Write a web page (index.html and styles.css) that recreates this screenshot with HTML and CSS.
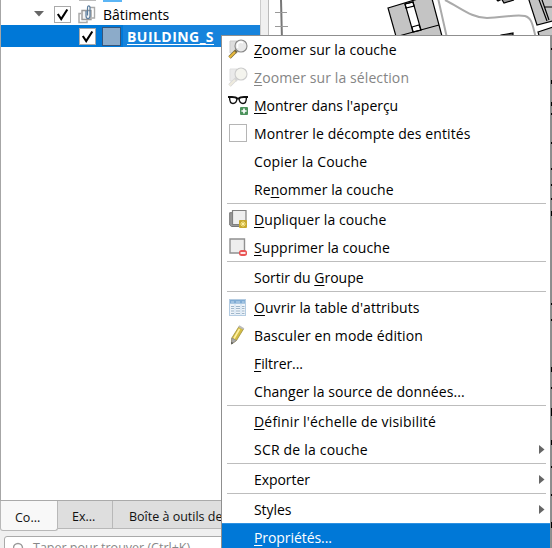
FILE: index.html
```
<!DOCTYPE html>
<html lang="fr">
<head>
<meta charset="utf-8">
<title>Couches</title>
<link rel="stylesheet" href="styles.css">
</head>
<body>
<div class="app">
  <div class="dock">
    <div class="tree">
      <div class="previous"><span class="prev-check"></span><span class="prev-swatch"></span></div>
      <div class="tree-row group">
        <svg class="twisty" width="10" height="6"><path d="M0 0H10L5 5.5Z" fill="#666"/></svg>
        <span class="check"><svg width="15" height="15"><path d="M2.8 7L6.2 12L12.3 2.5" fill="none" stroke="#000" stroke-width="2.1"/></svg></span>
        <svg class="group-icon" width="18" height="19" fill="none"><path d="M3 8.5H1V17.5H9V15.5" stroke="#aaa" stroke-width="1.5"/><path d="M4 5.5H13V14.5H4Z" stroke="#999" stroke-width="1.4" fill="#f4f4f4"/><path d="M12 2.5H16.5V13H14" stroke="#aaa" stroke-width="1.4"/><path d="M8 6V11Q8 13.5 10 13.5Q12 13.5 12 11V3Q12 .8 10.5 .8Q9.5 .8 9.5 3V10.5" stroke="#587b9c" stroke-width="1.2"/></svg>
        <span class="group-name">Bâtiments</span>
      </div>
      <div class="tree-row layer">
        <span class="check"><svg width="15" height="15"><path d="M2.8 7L6.2 12L12.3 2.5" fill="none" stroke="#000" stroke-width="2.1"/></svg></span>
        <span class="swatch"></span>
        <span class="layer-name">BUILDING_S</span>
      </div>
    </div>
    <div class="tabs"><span class="tab active">Co...</span><span class="tab second">Ex...</span><span class="tab third">Boîte à outils de</span></div>
    <div class="search"><svg width="14" height="14"><circle cx="5" cy="6" r="4.5" fill="none" stroke="#999" stroke-width="1.4"/></svg><span>Taper pour trouver (Ctrl+K)</span></div>
  </div>
  <div class="splitter"></div>
  <svg class="map" width="283" height="548" viewBox="269 0 283 548">
    <rect x="269" width="283" height="548" fill="#fff"/>
    <path d="M281 0L282 40" stroke="#777" stroke-width="2"/>
    <path d="M275 12.5H287M275 26.5H288" stroke="#999" stroke-width="1.2"/>
    <g fill="#c4c4c4" stroke="#000" stroke-width="1.2">
      <path d="M388 8L431-5L443 40H397Z"/>
      <path d="M405 4L413 2L421 30L413 32Z" fill="#fff"/>
      <path d="M405 4L413 2L414 6L406 8ZM412 27L419 25L421 30L413 32ZM395 37L439 25" fill="none"/>
      <path d="M528-3L537 25L556 20V-3ZM538-3L547 21M541-3L549 20M545 7H552"/>
      <path d="M538 32L553 27V50H543Z"/>
      <path d="M496-1L498 1L502-1M501-2L504 3L514 0" fill="#999"/>
      <path d="M501 35L513 33V37H501Z" fill="#555"/>
    </g>
    <path d="M438-2L447 38M445 0C461 8 472 18 487 18C502 18 514 14 525 16C533 18 533 29 536 38" fill="none" stroke="#aaa" stroke-width="2"/>
    <path d="M551 35V548" stroke="#8c8c8c" stroke-width="2"/>
    <path d="M551.5 48v2M551.5 80v4M551.5 102v4M551.5 113v2M551.5 142v2M551.5 168v2M551.5 184v2M551.5 198v2M551.5 211v5M551.5 303v2M551.5 319v2M551.5 367v5M551.5 387v2M551.5 408v8M551.5 440v5M551.5 466v2M551.5 494v2M551.5 522v6" stroke="#000"/>
  </svg>
  <nav class="menu">
    <div class="item"><span class="icon"><svg width="20" height="20"><path d="M2 2H9V14H2Z" fill="#ddd" stroke="#ccc"/><path d="M8.5 11.5L1.5 18.5" stroke="#77683a" stroke-width="3.4"/><path d="M7 13L1.5 18.5" stroke="#e8b93c" stroke-width="2.2"/><circle cx="13" cy="7" r="6" fill="#e9e9e9" stroke="#888" stroke-width="1.1"/><path d="M9.5 9V5Q12 2 15 4" fill="none" stroke="#fff" stroke-width="1.6"/></svg></span><span class="label l1"><u>Z</u>oomer sur la couche</span></div>
    <div class="item disabled"><span class="icon"><svg width="20" height="20"><path d="M2 2H9V14H2Z" fill="#ddd" stroke="#ccc"/><path d="M8.5 11.5L1.5 18.5" stroke="#bbb" stroke-width="3.4"/><path d="M7 13L1.5 18.5" stroke="#e4dfc9" stroke-width="2.2"/><circle cx="13" cy="7" r="6" fill="#eeeee4" stroke="#aaa" stroke-width="1.1"/></svg></span><span class="label l2"><u>Z</u>oomer sur la sélection</span></div>
    <div class="item"><span class="icon"><svg width="20" height="20"><path d="M0 2H4Q8 2 9 3.5H11Q12 2 16 2H20" fill="none" stroke="#111" stroke-width="1.8"/><path d="M1.6 2.5Q1.6 8.5 5 8.5Q8.5 8.5 9 3.5M11 3.5Q11.5 8.5 15 8.5Q18.4 8.5 18.4 2.5" fill="none" stroke="#111" stroke-width="1.4"/><rect x="12" y="12" width="8" height="8" rx="1" fill="#4c935c"/><path d="M16 13.4V18.6M13.4 16H18.6" stroke="#fff" stroke-width="1.7"/></svg></span><span class="label l3"><u>M</u>ontrer dans l'aperçu</span></div>
    <div class="item"><span class="icon"><span class="box"></span></span><span class="label l4">Montrer le décompte des entités</span></div>
    <div class="item"><span class="icon"></span><span class="label l5">Copier la Couche</span></div>
    <div class="item"><span class="icon"></span><span class="label l6">Re<u>n</u>ommer la couche</span></div>
    <div class="sep"></div>
    <div class="item"><span class="icon"><svg width="20" height="20"><path d="M1.7 3.7H13V17.5H3.5L1.7 16Z" fill="#999" stroke="#777"/><path d="M4.5 1.5H18V15.5H4.5Z" fill="#eee" stroke="#808080" stroke-width="1.2"/><rect x="11" y="11" width="8" height="8" rx="1" fill="#c8a92e"/><path d="M15 12.2v5.6M12.2 15h5.6M13.2 13.2l3.6 3.6M16.8 13.2l-3.6 3.6" stroke="#fff3a4" stroke-width=".9"/></svg></span><span class="label l7"><u>D</u>upliquer la couche</span></div>
    <div class="item"><span class="icon"><svg width="20" height="20"><path d="M2 2H16.5V16H2Z" fill="#eee" stroke="#909090" stroke-width="1.4"/><rect x="11" y="13" width="8" height="6" rx="2.5" fill="#e95454"/><path d="M12.5 16H17.5" stroke="#fff" stroke-width="1.7"/></svg></span><span class="label l8"><u>S</u>upprimer la couche</span></div>
    <div class="sep"></div>
    <div class="item"><span class="icon"></span><span class="label l9">Sortir du <u>G</u>roupe</span></div>
    <div class="sep"></div>
    <div class="item"><span class="icon"><svg width="20" height="20"><rect x="1.5" y="2.5" width="16" height="16" fill="#eef3f8" stroke="#b4cce2"/><path d="M2 4.8H17" stroke="#7fabd4" stroke-width="3.6"/><path d="M3 5H6M8 5H12M14 5H16.5" stroke="#c5dcf0"/><path d="M3 9.5H6M8 9.5H12M14 9.5H16.5M3 11.5H6M8 11.5H12M14 11.5H16.5M3 14H6M8 14H12M14 14H16.5M3 16.5H6M8 16.5H12M14 16.5H16.5" stroke="#9fb6ca"/><path d="M7 7V18M13 7V18" stroke="#cce0f2"/></svg></span><span class="label l10"><u>O</u>uvrir la table d'attributs</span></div>
    <div class="item"><span class="icon"><svg width="20" height="20"><path d="M11 1.5L15.5 4L8.5 15.5L3.5 19L3.8 13Z" fill="#d4bd43" stroke="#a08f3c" stroke-width=".8"/><path d="M11.5 4L6 13.5" stroke="#fff1a0" stroke-width="1.6"/><path d="M3.8 13L8.5 15.5L3.5 19Z" fill="#aaa" stroke="#888" stroke-width=".7"/><path d="M3.4 17V19.3L5.3 18Z" fill="#444"/><path d="M10.8 1.2L15.8 4" stroke="#bbb" stroke-width="2"/></svg></span><span class="label l11">Basculer en mode édition</span></div>
    <div class="item"><span class="icon"></span><span class="label l12"><u>F</u>iltrer...</span></div>
    <div class="item"><span class="icon"></span><span class="label l13">Changer la source de données...</span></div>
    <div class="sep"></div>
    <div class="item"><span class="icon"></span><span class="label l14"><u>D</u>éfinir l'échelle de visibilité</span></div>
    <div class="item"><span class="icon"></span><span class="label l15">SCR de la couche</span><svg class="arrow" width="6" height="9"><path d="M0 0L5.5 4.5L0 9Z" fill="#666"/></svg></div>
    <div class="sep"></div>
    <div class="item"><span class="icon"></span><span class="label l16">Exporter</span><svg class="arrow" width="6" height="9"><path d="M0 0L5.5 4.5L0 9Z" fill="#666"/></svg></div>
    <div class="sep"></div>
    <div class="item"><span class="icon"></span><span class="label l17">Styles</span><svg class="arrow" width="6" height="9"><path d="M0 0L5.5 4.5L0 9Z" fill="#666"/></svg></div>
    <div class="item selected"><span class="icon"></span><span class="label l18"><u>P</u>ropriétés...</span></div>
  </nav>
</div>
</body>
</html>
```
FILE: styles.css
```
* { box-sizing: border-box; }
body { margin: 0; overflow: hidden; font: 14px "Open Sans", "Noto Sans", sans-serif; color: #000; }
.app { position: relative; display: flex; width: 552px; height: 548px; overflow: hidden; background: #f0f0f0; }
.dock { width: 260px; flex: none; display: flex; flex-direction: column; }
.tree { height: 501px; flex: none; background: #fff; border-left: 1px solid #a6a6a6; border-bottom: 1px solid #aaa; }
.previous { height: 3px; display: flex; align-items: flex-start; padding-left: 78px; gap: 7px; }
.prev-check { width: 17px; height: 1px; background: #bbb; }
.prev-swatch { width: 19px; height: 2px; background: #5bb5f5; }
.tree-row { display: flex; align-items: center; height: 22px; white-space: nowrap; }
.group { padding-left: 33px; }
.check { display: flex; width: 17px; height: 17px; border: 1px solid #aaa; background: #fff; flex: none; }
.group .check { margin-left: 10px; }
.group-icon { margin-left: 7px; }
.group-name { margin-left: 7px; letter-spacing: -.02px; }
.layer { padding-left: 78px; background: linear-gradient(90deg, #0078d7 0 122px, #1683dc 122px); }
.swatch { width: 19px; height: 19px; margin-left: 6px; background: #8cabc9; border: 1px solid #36557b; flex: none; }
.layer-name { margin-left: 6px; color: #fff; font-weight: 700; text-decoration: underline; text-underline-offset: 2px; letter-spacing: .45px; }
.tabs { display: flex; flex: none; height: 29px; align-items: flex-start; font-size: 12.5px; line-height: 17px; color: #111; }
.tab { height: 28px; padding-top: 7px; border: 1px solid #b8b8b8; border-top: 0; background: #dedede; white-space: nowrap; }
.active { width: 58px; height: 30px; padding: 8px 0 0 14px; background: #f8f8f8; border-radius: 0 0 3px 3px; }
.second { width: 55px; padding-left: 14px; border-left: 0; }
.third { width: 147px; padding-left: 16px; border-left: 0; }
.search { display: flex; flex: none; height: 28px; margin: 6px 0 0 4px; padding: 4px 0 0 8px; background: #fff; border: 1px solid #aaa; border-radius: 3px; color: #888; font-size: 12.5px; line-height: 14px; white-space: nowrap; }
.search svg { margin-top: 1px; }
.search span { margin-left: 6px; }
.splitter { width: 9px; flex: none; background: #f0f0f0; border-left: 1px solid #ccc; border-right: 1px solid #bbb; }
.map { display: block; flex: none; }
.menu { position: absolute; left: 221px; top: 35px; width: 330px; height: 520px; background: #fff; }
.menu::after { content: ""; position: absolute; inset: 0; border: 1px solid #8f8f8f; pointer-events: none; }
.item { display: flex; align-items: center; height: 28px; padding: 0 6px 0 7px; white-space: nowrap; }
.icon { display: flex; width: 20px; height: 20px; margin-right: 6px; flex: none; }
.box { width: 18px; height: 18px; margin: 1px; border: 1px solid #b5b5b5; }
.label { padding-top: 1px; letter-spacing: .06px; }
.l2 { letter-spacing: .1px; }
.l3, .l9 { letter-spacing: -.02px; }
.l4, .l7 { letter-spacing: .1px; }
.l5 { letter-spacing: .17px; }
.l11 { letter-spacing: .1px; }
.l12, .l16, .l17, .l18 { letter-spacing: -.07px; }
.l14 { letter-spacing: .17px; }
.l15 { letter-spacing: .2px; }
.item u { text-decoration-thickness: 1px; text-underline-offset: 2px; }
.disabled { color: #858585; }
.disabled svg { opacity: .6; }
.sep { height: 2px; margin: 0 5px 0 6px; border-top: 1px solid #bdbdbd; }
.arrow { margin-left: auto; }
.selected { background: #0078d7; border-top: 1px solid #2d91e2; color: #fff; }
.selected .label { padding-top: 0; margin-top: -1px; }
```
